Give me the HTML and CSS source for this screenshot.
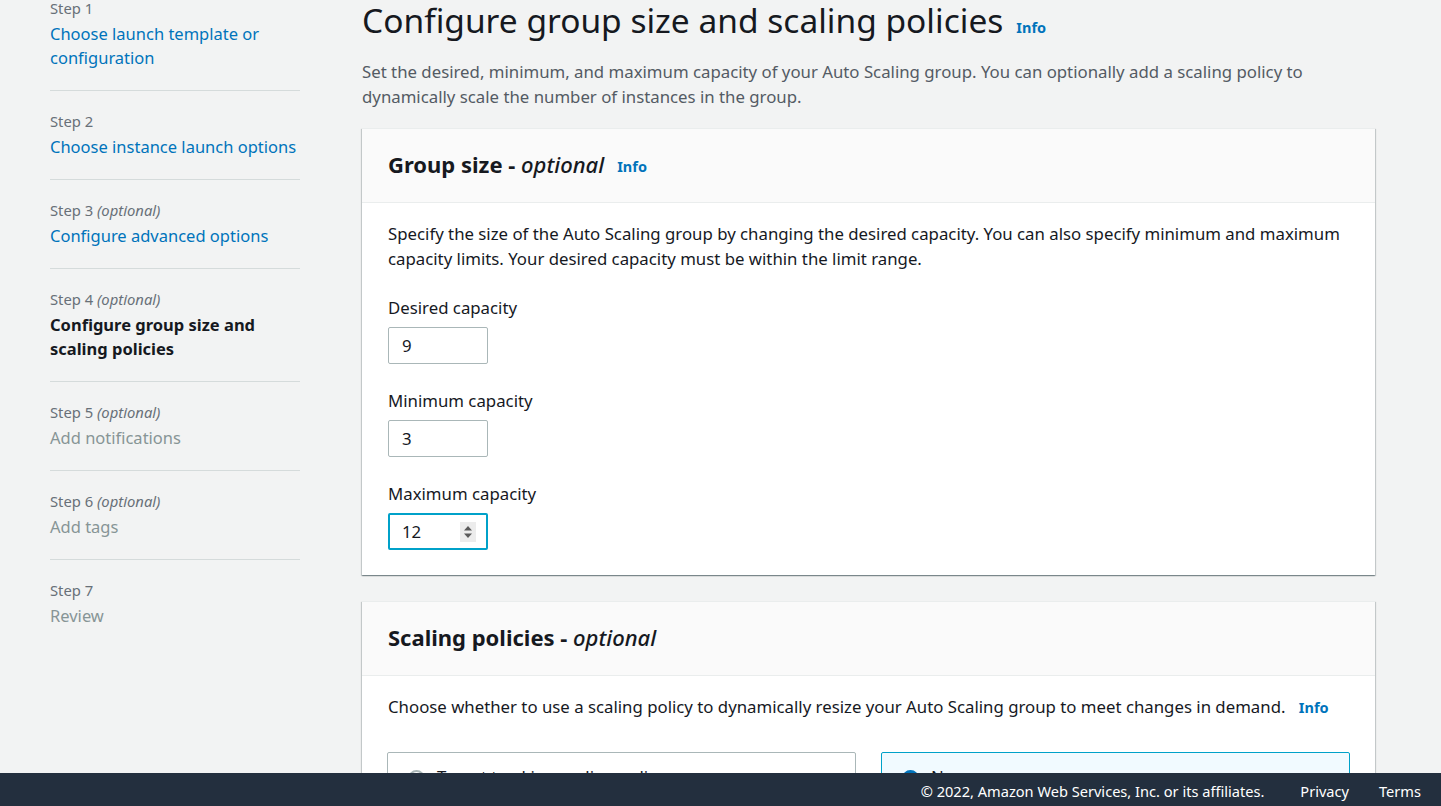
FILE: index.html
```html
<!DOCTYPE html>
<html lang="en">
<head>
<meta charset="utf-8">
<title>Configure group size and scaling policies</title>
<link rel="stylesheet" href="styles.css">
</head>
<body>
<div class="layout">
  <nav class="sidebar">
    <div class="step">
      <div class="step-label">Step 1</div>
      <a class="step-title link" href="#">Choose launch template or configuration</a>
    </div>
    <div class="step">
      <div class="step-label">Step 2</div>
      <a class="step-title link" href="#">Choose instance launch options</a>
    </div>
    <div class="step">
      <div class="step-label">Step 3 <i>(optional)</i></div>
      <a class="step-title link" href="#">Configure advanced options</a>
    </div>
    <div class="step">
      <div class="step-label">Step 4 <i>(optional)</i></div>
      <div class="step-title current">Configure group size and scaling policies</div>
    </div>
    <div class="step">
      <div class="step-label">Step 5 <i>(optional)</i></div>
      <div class="step-title disabled">Add notifications</div>
    </div>
    <div class="step">
      <div class="step-label">Step 6 <i>(optional)</i></div>
      <div class="step-title disabled">Add tags</div>
    </div>
    <div class="step last">
      <div class="step-label">Step 7</div>
      <div class="step-title disabled">Review</div>
    </div>
  </nav>

  <main class="main">
    <h1 class="page-title">Configure group size and scaling policies <a class="info" href="#">Info</a></h1>
    <p class="page-desc">Set the desired, minimum, and maximum capacity of your Auto Scaling group. You can optionally add a scaling policy to dynamically scale the number of instances in the group.</p>

    <section class="panel">
      <header class="panel-header">
        <h2 class="panel-title">Group size - <i>optional</i></h2>
        <a class="info" href="#">Info</a>
      </header>
      <div class="panel-body">
        <p class="panel-text">Specify the size of the Auto Scaling group by changing the desired capacity. You can also specify minimum and maximum capacity limits. Your desired capacity must be within the limit range.</p>
        <div class="field">
          <div class="field-label">Desired capacity</div>
          <div class="input">9</div>
        </div>
        <div class="field">
          <div class="field-label">Minimum capacity</div>
          <div class="input">3</div>
        </div>
        <div class="field">
          <div class="field-label">Maximum capacity</div>
          <div class="input focused">
            <span class="input-value">12</span>
            <span class="spinner">
              <svg width="16" height="20" viewBox="0 0 16 20"><path d="M4 8.5 L8 4 L12 8.5 Z" fill="#5a5a5a"/><path d="M4 11.5 L8 16 L12 11.5 Z" fill="#5a5a5a"/></svg>
            </span>
          </div>
        </div>
      </div>
    </section>

    <section class="panel">
      <header class="panel-header">
        <h2 class="panel-title">Scaling policies - <i>optional</i></h2>
      </header>
      <div class="panel-body">
        <p class="panel-text">Choose whether to use a scaling policy to dynamically resize your Auto Scaling group to meet changes in demand. <a class="info inline" href="#">Info</a></p>
        <div class="tiles">
          <div class="tile">
            <span class="radio"></span>
            <div>
              <div class="tile-title">Target tracking scaling policy</div>
              <div class="tile-desc">Choose a desired outcome and leave it to the scaling policy to add and remove capacity as needed to achieve that outcome.</div>
            </div>
          </div>
          <div class="tile selected">
            <span class="radio checked"></span>
            <div>
              <div class="tile-title">None</div>
            </div>
          </div>
        </div>
      </div>
    </section>
  </main>
</div>

<footer class="footer">
  <span class="copy">© 2022, Amazon Web Services, Inc. or its affiliates.</span>
  <a class="footer-link privacy" href="#">Privacy</a>
  <a class="footer-link terms" href="#">Terms</a>
</footer>
</body>
</html>
```

FILE: styles.css
```css
* { box-sizing: border-box; }

html, body {
  margin: 0;
  padding: 0;
}

body {
  background: #f2f3f3;
  color: #16191f;
  font-family: "Noto Sans", "Open Sans", Arial, sans-serif;
  font-size: 16.8px;
  overflow: hidden;
}

a { text-decoration: none; }

.layout {
  display: flex;
  align-items: flex-start;
  padding-left: 50px;
}

/* Sidebar */
.sidebar {
  width: 250px;
  flex: none;
  margin-top: -22px;
}

.step {
  padding: 20px 0;
  border-bottom: 1px solid #d5dbdb;
}

.step.last { border-bottom: none; }

.step-label {
  font-size: 14.8px;
  line-height: 21px;
  color: #687078;
  margin-bottom: 3px;
}

.step-title {
  display: block;
  font-size: 16.5px;
  line-height: 24px;
}

.step-title.link { color: #0073bb; }
.step-title.current { color: #16191f; font-weight: 700; }
.step-title.disabled { color: #879596; }

/* Main */
.main {
  width: 1013px;
  margin-left: 62px;
}

.page-title {
  margin: 0;
  height: 40px;
  font-size: 33.5px;
  font-weight: 400;
  line-height: 40px;
  color: #16191f;
  display: flex;
  align-items: baseline;
  gap: 13px;
  white-space: nowrap;
}

.info {
  color: #0073bb;
  font-size: 14.5px;
  font-weight: 700;
}

.page-desc {
  margin: 19px 0 0;
  font-size: 16.8px;
  line-height: 25px;
  color: #545b64;
}

.panel {
  margin-top: 19px;
  background: #ffffff;
  box-shadow: 0 1px 1px 0 rgba(0, 28, 36, 0.3), 1px 1px 1px 0 rgba(0, 28, 36, 0.15), -1px 1px 1px 0 rgba(0, 28, 36, 0.15);
  border-top: 1px solid #eaeded;
}

.panel + .panel { margin-top: 26px; }

.panel-header {
  height: 74px;
  padding: 0 26px 4px;
  background: #fafafa;
  border-bottom: 1px solid #eaeded;
  display: flex;
  align-items: center;
  gap: 13px;
}

.panel-header .info { margin-top: 4px; }

.panel-title {
  margin: 0;
  font-size: 22px;
  font-weight: 700;
  line-height: 28px;
  color: #16191f;
}

.panel-title i { font-weight: 500; font-style: italic; }

.panel-body {
  padding: 18px 26px 25px;
}

.panel-text {
  margin: 0;
  font-size: 16.8px;
  line-height: 25px;
  color: #16191f;
}

.info.inline { margin-left: 9px; }

.field { margin-top: 25px; }

.field-label {
  font-size: 16.8px;
  line-height: 24px;
  margin-bottom: 7px;
}

.input {
  width: 100px;
  height: 37px;
  border: 1px solid #aab7b8;
  border-radius: 2px;
  padding: 0 13px;
  display: flex;
  align-items: center;
  font-size: 16.8px;
  background: #fff;
}

.input.focused {
  border: 2px solid #00a1c9;
  padding: 0 12px;
  justify-content: space-between;
}

.spinner {
  width: 16px;
  height: 20px;
  background: #ececec;
  display: flex;
  margin-right: -2px;
}

.tiles {
  margin-top: 32px;
  display: grid;
  grid-template-columns: 1fr 1fr;
  gap: 25px;
  margin-right: -1px;
  margin-left: -1px;
}

.tile {
  border: 1px solid #aab7b8;
  border-radius: 2px;
  padding: 12px 20px 20px;
  display: flex;
  gap: 12px;
  background: #fff;
}

.tile.selected {
  border-color: #00a1c9;
  background: #f1faff;
}

.radio {
  flex: none;
  width: 17px;
  height: 17px;
  border: 2px solid #aab7b8;
  border-radius: 50%;
  margin-top: 5px;
}

.radio.checked {
  border: 5px solid #0073bb;
  background: #fff;
}

.tile-title { font-size: 16.8px; line-height: 24px; }
.tile-desc { font-size: 14px; line-height: 20px; color: #687078; }

/* Footer */
.footer {
  position: fixed;
  left: 0;
  right: 0;
  bottom: 0;
  height: 33px;
  background: #232f3e;
  color: #ffffff;
  font-size: 14.6px;
  display: flex;
  align-items: center;
  justify-content: flex-end;
  padding-right: 20px;
  padding-top: 2px;
}

.footer-link { color: #ffffff; }
.privacy { margin-left: 36px; }
.terms { margin-left: 30px; }
```
